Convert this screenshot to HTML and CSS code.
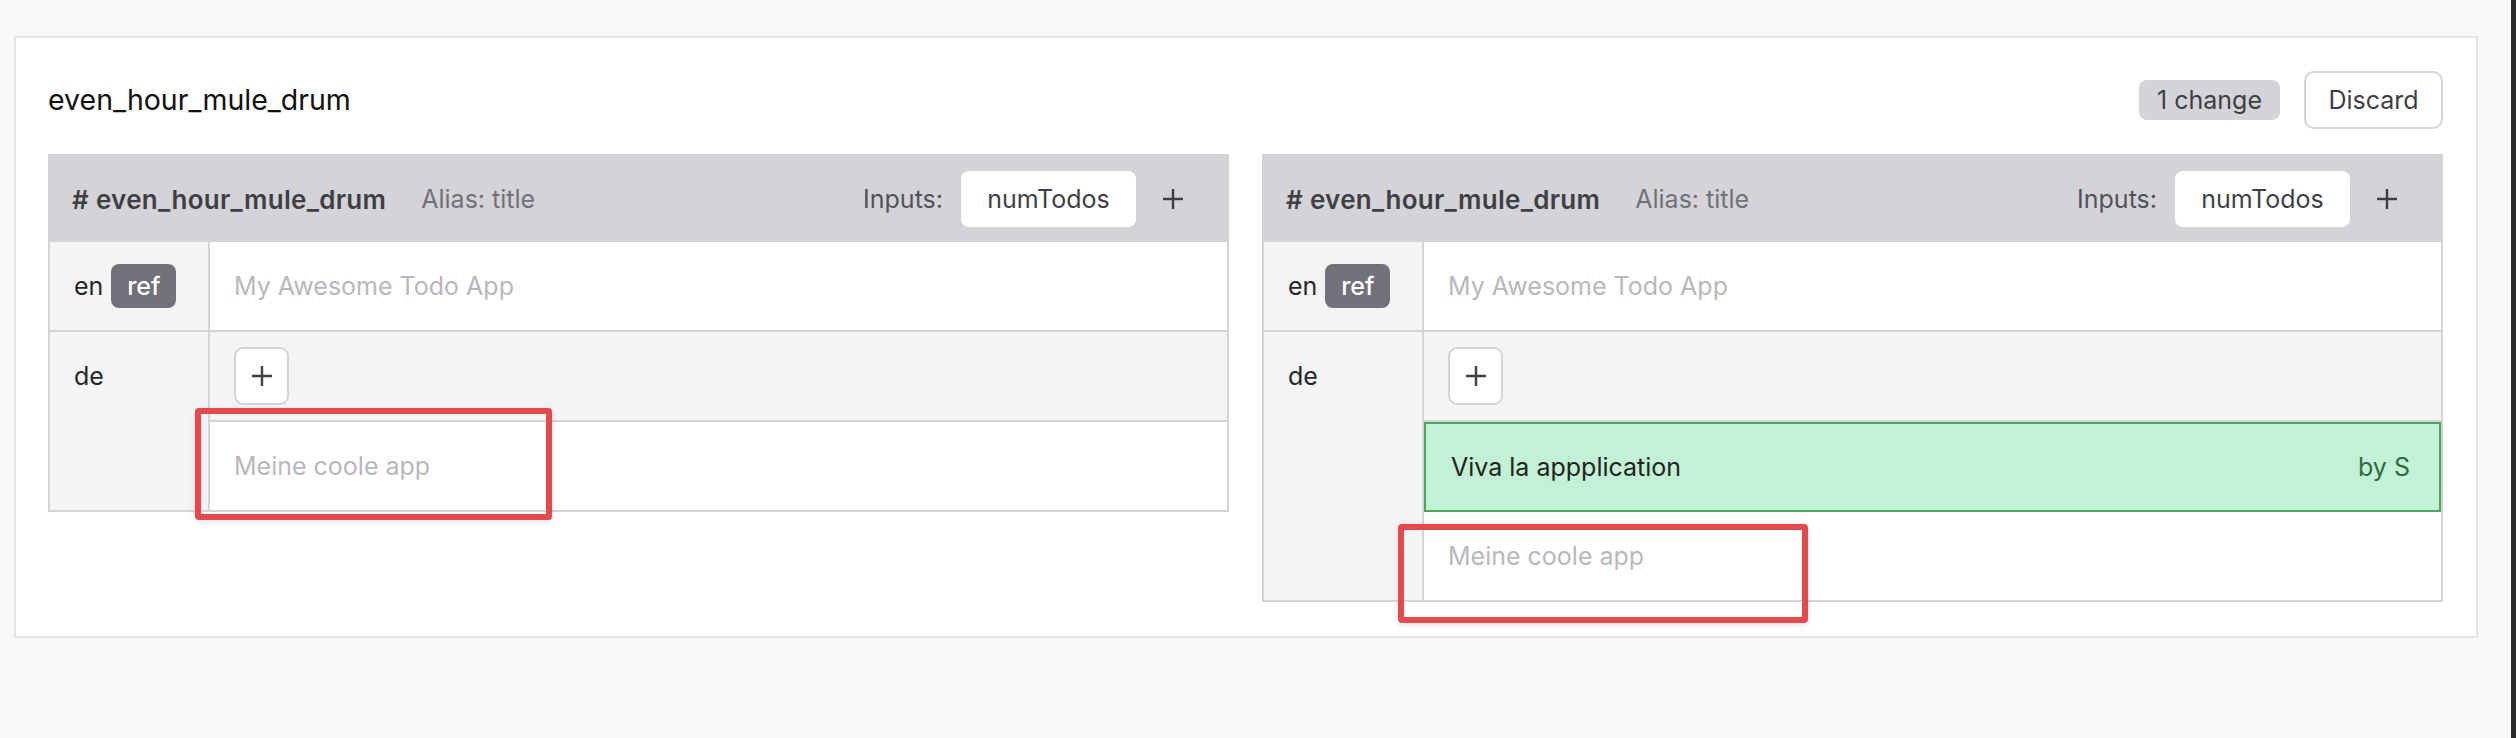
FILE: index.html
```html
<!DOCTYPE html>
<html lang="en">
<head>
<meta charset="utf-8">
<title>even_hour_mule_drum</title>
<link rel="stylesheet" href="styles.css">
</head>
<body>
<div class="page">
  <main class="main">
    <section class="card">
      <div class="card-head">
        <h1 class="title">even_hour_mule_drum</h1>
        <div class="actions">
          <span class="change-pill">1 change</span>
          <button class="btn">Discard</button>
        </div>
      </div>
      <div class="panels">
        <div class="panel">
          <div class="phead">
            <span class="pname"># even_hour_mule_drum</span>
            <span class="alias">Alias: title</span>
            <span class="spacer"></span>
            <span class="inputs-label">Inputs:</span>
            <span class="input-pill">numTodos</span>
            <span class="head-plus"><svg viewBox="0 0 22 22" width="22" height="22"><path d="M11 1v20M1 11h20" stroke="#3f3f46" stroke-width="2.4" fill="none"/></svg></span>
          </div>
          <div class="row">
            <div class="lang"><div class="lang-line">en <span class="ref">ref</span></div></div>
            <div class="val"><div class="cell muted">My Awesome Todo App</div></div>
          </div>
          <div class="row">
            <div class="lang"><div class="lang-line">de</div></div>
            <div class="val">
              <div class="add-area"><button class="add-btn"><svg viewBox="0 0 22 22" width="22" height="22"><path d="M11 1v20M1 11h20" stroke="#3f3f46" stroke-width="2.4" fill="none"/></svg></button></div>
              <div class="cell muted">Meine coole app</div>
            </div>
          </div>
        </div>
        <div class="panel">
          <div class="phead">
            <span class="pname"># even_hour_mule_drum</span>
            <span class="alias">Alias: title</span>
            <span class="spacer"></span>
            <span class="inputs-label">Inputs:</span>
            <span class="input-pill">numTodos</span>
            <span class="head-plus"><svg viewBox="0 0 22 22" width="22" height="22"><path d="M11 1v20M1 11h20" stroke="#3f3f46" stroke-width="2.4" fill="none"/></svg></span>
          </div>
          <div class="row">
            <div class="lang"><div class="lang-line">en <span class="ref">ref</span></div></div>
            <div class="val"><div class="cell muted">My Awesome Todo App</div></div>
          </div>
          <div class="row">
            <div class="lang"><div class="lang-line">de</div></div>
            <div class="val">
              <div class="add-area"><button class="add-btn"><svg viewBox="0 0 22 22" width="22" height="22"><path d="M11 1v20M1 11h20" stroke="#3f3f46" stroke-width="2.4" fill="none"/></svg></button></div>
              <div class="suggestion"><span>Viva la appplication</span><span class="by">by S</span></div>
              <div class="cell muted">Meine coole app</div>
            </div>
          </div>
        </div>
      </div>
    </section>
  </main>
  <div class="edge"></div>
</div>
<div class="mark mark-left"></div>
<div class="mark mark-right"></div>
</body>
</html>
```

FILE: styles.css
```css
* { box-sizing: border-box; }
html, body { margin: 0; padding: 0; }
body {
  background: #f8f8f8;
  font-family: Inter, "Noto Sans", "Liberation Sans", sans-serif;
  font-size: 25px;
  color: #27272a;
  height: 738px;
  overflow: hidden;
  position: relative;
}
.page { display: flex; height: 738px; }
.main { flex: 1; padding: 36px 33px 0 14px; }
.edge { width: 5px; background: #2b2b2d; }

.card {
  background: #fff;
  border: 2px solid #e4e4e7;
  padding: 33px 33px 34px 32px;
}
.card-head {
  display: flex;
  align-items: center;
  justify-content: space-between;
  height: 58px;
  margin-bottom: 25px;
}
.title {
  margin: 0;
  font-size: 28.5px;
  font-weight: 400;
  color: #111;
  line-height: 1;
}
.actions { display: flex; align-items: center; gap: 24px; }
.change-pill {
  background: #d4d4d8;
  color: #3f3f46;
  border-radius: 8px;
  height: 40px;
  padding: 0 18px;
  display: flex;
  align-items: center;
  font-size: 25px;
}
.btn {
  font: inherit;
  font-size: 25px;
  color: #3f3f46;
  background: #fff;
  border: 2px solid #d4d4d8;
  border-radius: 10px;
  height: 58px;
  width: 139px;
  padding: 0;
}

.panels { display: flex; gap: 33px; align-items: flex-start; }
.panel { flex: 1; border: 2px solid #d4d4d8; }

.phead {
  height: 86px;
  background: #d4d4d8;
  display: flex;
  align-items: center;
  padding: 0 43px 0 22px;
}
.pname { font-weight: 600; color: #3f3f46; font-size: 26px; letter-spacing: 0.3px; }
.alias { color: #71717a; margin-left: 35px; }
.spacer { flex: 1; }
.inputs-label { color: #52525b; }
.input-pill {
  background: #fff;
  color: #3f3f46;
  border-radius: 8px;
  height: 56px;
  width: 175px;
  display: flex;
  align-items: center;
  justify-content: center;
  margin-left: 18px;
}
.head-plus { display: flex; margin-left: 26px; }

.row { display: flex; border-top: 2px solid #d4d4d8; }
.phead + .row { border-top: none; }
.lang {
  width: 160px;
  background: #f4f4f5;
  border-right: 2px solid #d4d4d8;
  padding-left: 24px;
}
.lang-line { height: 88px; display: flex; align-items: center; gap: 8px; color: #27272a; }
.ref {
  background: #71717a;
  color: #fff;
  border-radius: 8px;
  height: 44px;
  width: 65px;
  display: flex;
  align-items: center;
  justify-content: center;
  font-weight: 500;
}
.val { flex: 1; display: flex; flex-direction: column; }
.cell {
  height: 88px;
  display: flex;
  align-items: center;
  padding-left: 24px;
  background: #fff;
}
.muted { color: #b8b8bc; }
.add-area {
  height: 90px;
  background: #f4f4f5;
  border-bottom: 2px solid #d4d4d8;
  display: flex;
  align-items: center;
  padding-left: 24px;
}
.add-btn {
  width: 55px;
  height: 58px;
  background: #fff;
  border: 2px solid #d4d4d8;
  border-radius: 9px;
  display: flex;
  align-items: center;
  justify-content: center;
  padding: 0;
}
.suggestion {
  height: 90px;
  background: #c3f1d5;
  border: 2px solid #4ea35e;
  display: flex;
  align-items: center;
  justify-content: space-between;
  padding: 0 29px 0 25px;
  color: #1f2421;
}
.by { color: #2f6b3c; }

.mark {
  position: absolute;
  border: 6px solid #e5484d;
  border-radius: 4px;
  box-shadow: 0 2px 6px rgba(0,0,0,0.12);
}
.mark-left { left: 195px; top: 408px; width: 357px; height: 112px; }
.mark-right { left: 1398px; top: 524px; width: 410px; height: 99px; }
```
